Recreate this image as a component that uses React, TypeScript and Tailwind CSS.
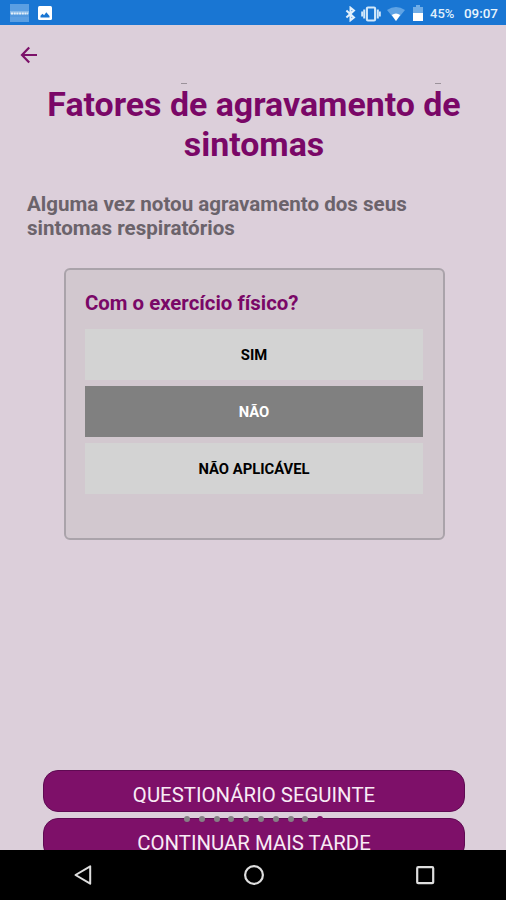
import { clsx } from "clsx";

const options = [
  { label: "SIM", selected: false },
  { label: "NÃO", selected: true },
  { label: "NÃO APLICÁVEL", selected: false },
];

function StatusBar() {
  return (
    <div className="h-[25px] shrink-0 bg-[#1976d3] flex items-center justify-between pl-[10px] pr-[7px]">
      <div className="flex items-center gap-[9px]">
        <svg className="w-[19px] h-[18px] mt-px" viewBox="0 0 19 18">
          <rect width="19" height="18" fill="#5b9fe2" />
          <path d="M0 8.5h19" stroke="#85b8e8" strokeWidth="3" />
          <path d="M1 9.5h17" stroke="#e4eff8" strokeWidth="2" strokeDasharray="2 .7" />
          <path d="M0 12h19" stroke="#4a92dc" strokeWidth="1" />
        </svg>
        <svg className="w-[14px] h-[14px] mt-px" viewBox="0 0 14 14">
          <rect width="14" height="14" rx="1.5" fill="#fff" />
          <path d="M2.5 11.5v-1.7l2-2 1.6 1.4 2.2-2.9 3.2 3.8v1.4z" fill="#1976d3" />
        </svg>
      </div>

      <div className="flex items-center">
        <svg className="w-[11px] h-[16px] mr-[5px] mt-[2px]" viewBox="0 0 11 16" fill="none" stroke="#e3f1fc" strokeWidth="2">
          <path d="M1.4 4.5l7.6 7-3.5 2.8V1.7l3.5 2.8-7.6 7" />
        </svg>
        <svg className="w-[20px] h-[16px] mr-[6px] mt-[2px]" viewBox="0 0 20 16" fill="none" stroke="#d2e8fa">
          <rect x="5.9" y="1.5" width="8.2" height="13" rx="1" strokeWidth="2.1" />
          <path d="M3.2 3.5v9M16.8 3.5v9" strokeWidth="2" />
          <path d="M1.1 5.5v5M18.9 5.5v5" strokeWidth="1.8" />
        </svg>
        <svg className="w-[18px] h-[14px] mr-[8px] mt-[2px]" viewBox="0 0 18 14">
          <path d="M0 3Q9-3 18 3L9 14z" fill="#5fa3e4" />
          <path d="M4.7 8Q9 5 13.3 8L9 14z" fill="#fff" />
        </svg>
        <svg className="w-[10px] h-[16px] mr-[7px] mt-px" viewBox="0 0 10 16">
          <path d="M0 2h3V0h4v2h3v7H0z" fill="#70ade7" />
          <path d="M0 8h10v8H0z" fill="#fff" />
        </svg>
        <span className="w-[34px] text-[13px] leading-[15px] font-medium text-[#dfeefb] mt-[2px] whitespace-nowrap">45%</span>
        <span className="w-[35px] text-[13.4px] leading-[15px] font-medium text-[#e8f4fd] mt-[2px] whitespace-nowrap">09:07</span>
      </div>
    </div>
  );
}

function NavBar() {
  return (
    <div className="h-[50px] shrink-0 bg-black flex items-center justify-between pl-[73px] pr-[70px]">
      <svg className="w-[20px] h-[22px]" viewBox="0 0 20 22" fill="none" stroke="#dedede" strokeWidth="2">
        <path d="M17.2 2.3v17.4L2.5 11z" strokeLinejoin="round" />
      </svg>
      <svg className="w-[22px] h-[22px]" viewBox="0 0 22 22" fill="none" stroke="#dedede" strokeWidth="2.2">
        <circle cx="11" cy="11" r="8.9" />
      </svg>
      <svg className="w-[22px] h-[22px]" viewBox="0 0 22 22" fill="none" stroke="#dedede" strokeWidth="2.2">
        <rect x="3.2" y="3.2" width="16" height="16" rx="1" />
      </svg>
    </div>
  );
}

export default function App() {
  return (
    <div className="w-[506px] h-[900px] overflow-hidden flex flex-col bg-[#dccfda] font-['Roboto',sans-serif]">
      <StatusBar />

      <main className="flex-1 min-h-0 overflow-hidden flex flex-col">
        <svg className="w-[18px] h-[18px] ml-[20px] mt-[21px] shrink-0" viewBox="0 0 18 18" fill="none" stroke="#7c1169" strokeWidth="2.2">
          <path d="M17 9H2.5M9.2 1.4L2 9l7.2 7.6" />
        </svg>

        {/* title */}
        <h1 className="relative mt-[21px] text-center text-[33.9px] leading-[40px] font-bold text-[#7a0767] whitespace-nowrap pl-[2px]">
          <span className="absolute left-[181px] top-[-2px] w-[6px] h-px bg-[#9b929a]" />
          <span className="absolute left-[435px] top-[-2px] w-[6px] h-px bg-[#9b929a]" />
          Fatores de agravamento de
          <br />
          sintomas
        </h1>

        <p className="mt-[27px] ml-[27px] text-[20.55px] leading-[24px] font-bold text-[#6b636b] whitespace-nowrap">
          Alguma vez notou agravamento dos seus
          <br />
          sintomas respiratórios
        </p>

        {/* question card */}
        <section className="mt-[28px] ml-[64px] w-[381px] h-[272px] shrink-0 rounded-[6px] border-2 border-[#aaa3aa] bg-[#d2c8cf] px-[19px] pt-[20px]">
          <h2 className="text-[20.4px] leading-[26px] font-bold text-[#7a0767] whitespace-nowrap">
            Com o exercício físico?
          </h2>
          <div className="mt-[13px] w-[338px] flex flex-col gap-[6px]">
            {options.map((option) => (
              <button
                key={option.label}
                className={clsx(
                  "h-[51px] w-full pt-px text-[14.8px] font-bold",
                  option.selected ? "bg-[#808080] text-white" : "bg-[#d3d3d3] text-black"
                )}
              >
                {option.label}
              </button>
            ))}
          </div>
        </section>

        {/* actions, the page dots lie over the gap between them */}
        <div className="relative mt-auto mx-[43px] h-[80px] shrink-0">
          <button className="block w-[422px] h-[42px] rounded-[15px] border border-[#5f0a52] bg-[#7e1069] pb-[8px] text-[20.4px] text-[#f8ebf5]">
            <span className="block mt-[11px] h-[21px] leading-[27px] overflow-hidden">QUESTIONÁRIO SEGUINTE</span>
          </button>
          <button className="flex justify-center w-[422px] h-[42px] mt-[6px] rounded-[15px] border border-[#5f0a52] bg-[#7e1069] pt-[11px] text-[20.4px] leading-[26px] text-[#f8ebf5]">
            CONTINUAR MAIS TARDE
          </button>
          <div className="absolute left-[141px] top-[46px] flex gap-[8.8px]">
            {Array.from({ length: 9 }, (_, i) => (
              <span key={i} className="size-[6px] rounded-full bg-[#858085]" />
            ))}
            <span className="size-[6px] rounded-full bg-[#7e1069]" />
          </div>
        </div>
      </main>

      <NavBar />
    </div>
  );
}
